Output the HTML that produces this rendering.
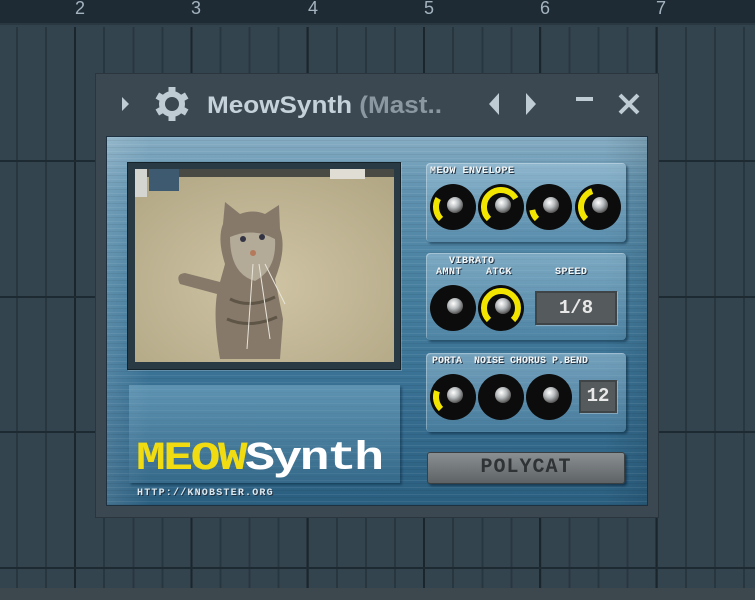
<!DOCTYPE html>
<html><head><meta charset="utf-8"><style>
*{margin:0;padding:0;box-sizing:border-box}
body{width:755px;height:600px;overflow:hidden;background:#33434e;position:relative;font-family:"Liberation Sans",sans-serif}
.ruler{position:absolute;left:0;top:0;width:755px;height:25px;background:#1f2b34;border-bottom:2px solid #2a3842}
.ruler span{position:absolute;top:-2px;color:#a3b3bf;font-size:18px;font-family:"Liberation Sans",sans-serif}
.grid{position:absolute;left:0;top:27px;width:755px;height:561px;
background:
linear-gradient(#1e2a32,#1e2a32) 0 133px/755px 2px no-repeat,
linear-gradient(#1e2a32,#1e2a32) 0 269px/755px 2px no-repeat,
linear-gradient(#1e2a32,#1e2a32) 0 404px/755px 2px no-repeat,
linear-gradient(#1e2a32,#1e2a32) 0 540px/755px 2px no-repeat,
repeating-linear-gradient(90deg,transparent 0 74px,#1a252c 74px 76px,transparent 76px 116.3px),
repeating-linear-gradient(90deg,transparent 0 16px,#28363f 16px 18px,transparent 18px 29.08px),#34444f}
.bottom{position:absolute;left:0;top:588px;width:755px;height:12px;background:#3c474e}
.win{position:absolute;left:95px;top:73px;width:564px;height:445px;background:#3b4751;border:1px solid #2b353d}
.panel{position:absolute;left:106px;top:136px;width:542px;height:370px;border:1px solid #1e3140;
background:
repeating-linear-gradient(180deg,rgba(255,255,255,.07) 0 1px,transparent 1px 3px,rgba(0,0,0,.06) 3px 4px,transparent 4px 7px),
linear-gradient(90deg,rgba(255,255,255,.12),transparent 8%,transparent 92%,rgba(0,0,0,.1)),
linear-gradient(180deg,#86adc3 0%,#5f91af 15%,#477f9f 40%,#3a7295 65%,#2b5f80 100%)}
.box{position:absolute;border-radius:4px;background:linear-gradient(180deg,rgba(170,205,225,.5),rgba(100,150,180,.4));box-shadow:2px 2px 2px rgba(0,30,50,.5),inset 1px 1px 0 rgba(255,255,255,.3)}
.lbl{position:absolute;color:#f4f6f6;font:bold 10px "Liberation Mono",monospace;letter-spacing:0.5px;text-shadow:1px 1px 0 #234}
.disp{position:absolute;background:#555a5c;border:2px solid #3f4446;color:#e8e8e8;font:bold 19px "Liberation Mono",monospace;text-align:center;box-shadow:1px 1px 0 rgba(255,255,255,.3)}
svg.k{position:absolute;width:48px;height:48px}
</style></head><body>
<div class="ruler">
<span style="left:75px">2</span><span style="left:191px">3</span><span style="left:308px">4</span><span style="left:424px">5</span><span style="left:540px">6</span><span style="left:656px">7</span>
</div>
<div class="grid"></div>
<div class="bottom"></div>
<div class="win"></div>
<svg style="position:absolute;left:95px;top:73px" width="564" height="62">
<polygon points="27,24 34,31 27,38" fill="#c0ccd4"/>
<g transform="translate(77,31)" fill="#c0ccd4">
<circle r="13"/>
<g><rect x="-3.5" y="-17" width="7" height="34"/><rect x="-3.5" y="-17" width="7" height="34" transform="rotate(60)"/><rect x="-3.5" y="-17" width="7" height="34" transform="rotate(120)"/></g>
<circle r="7" fill="#3b4751"/></g>
<text x="112" y="40" font-family="Liberation Sans,sans-serif" font-size="24" font-weight="bold" fill="#c6d2da" textLength="235" lengthAdjust="spacingAndGlyphs">MeowSynth <tspan fill="#8b98a1">(Mast..</tspan></text>
<polygon points="404,20 394,31 404,42" fill="#c0ccd4"/>
<polygon points="431,20 441,31 431,42" fill="#c0ccd4"/>
<rect x="481" y="24" width="17" height="4" fill="#c0ccd4"/>
<path d="M525,22 L543,40 M543,22 L525,40" stroke="#c0ccd4" stroke-width="4"/>
</svg>
<div class="panel"></div>
<div style="position:absolute;left:127px;top:162px;width:274px;height:208px;background:#2a3a44;border:1px solid #16222a;box-shadow:1px 1px 0 rgba(255,255,255,.2)"></div>
<svg style="position:absolute;left:135px;top:169px" width="259" height="193">
<defs><radialGradient id="fl" cx="50%" cy="60%" r="70%"><stop offset="0" stop-color="#cfc4a4"/><stop offset="1" stop-color="#b3a886"/></radialGradient></defs>
<rect width="259" height="193" fill="url(#fl)"/>
<rect width="259" height="8" fill="#4a4a44"/>
<rect x="14" y="0" width="30" height="22" fill="#3d5a70"/>
<rect x="0" y="0" width="12" height="28" fill="#d4d4d0"/>
<rect x="195" y="0" width="35" height="10" fill="#e0ddd4"/>
<path d="M90,95 Q82,70 88,55 L90,33 L105,45 Q118,40 130,45 L144,36 L145,60 Q152,80 140,110 L148,150 L145,190 L85,190 Q78,150 82,125 L45,115 Q40,105 50,104 L85,113 Z" fill="#86796a"/>
<path d="M95,68 Q118,58 140,70 Q142,100 120,112 Q95,105 95,68Z" fill="#b3aa98"/>
<circle cx="108" cy="70" r="3" fill="#334"/><circle cx="127" cy="68" r="3" fill="#334"/>
<circle cx="118" cy="84" r="3" fill="#b57a5c"/>
<path d="M95,130 Q115,140 140,128 M92,150 Q115,160 142,148" stroke="#5e5547" stroke-width="3" fill="none"/>
<path d="M118,95 L112,180 M124,95 L135,170 M130,95 L150,135" stroke="#e8e4da" stroke-width="1" fill="none"/>
</svg>
<div style="position:absolute;left:129px;top:385px;width:271px;height:98px;background:linear-gradient(180deg,rgba(140,190,215,.45),rgba(70,120,150,.35));box-shadow:2px 2px 2px rgba(0,30,50,.4)"></div>
<div style="position:absolute;left:136px;top:440px;font:bold 40px 'Liberation Mono',monospace;color:#f0dc10;line-height:40px;transform:scaleX(1.24);transform-origin:0 0;white-space:nowrap;letter-spacing:-2px">MEOW<span style="color:#fff">Synth</span></div>
<div class="lbl" style="left:137px;top:488px;font-size:10px;color:#dce8ee;letter-spacing:1.2px">HTTP://KNOBSTER.ORG</div>

<div class="box" style="left:426px;top:163px;width:200px;height:79px"></div>
<div class="box" style="left:426px;top:253px;width:200px;height:87px"></div>
<div class="box" style="left:426px;top:353px;width:200px;height:79px"></div>
<div class="lbl" style="left:430px;top:166px">MEOW ENVELOPE</div>
<div class="lbl" style="left:449px;top:256px">VIBRATO</div>
<div class="lbl" style="left:436px;top:267px">AMNT</div>
<div class="lbl" style="left:486px;top:267px">ATCK</div>
<div class="lbl" style="left:555px;top:267px">SPEED</div>
<div class="lbl" style="left:432px;top:356px;letter-spacing:0">PORTA&nbsp;&nbsp;NOISE CHORUS P.BEND</div>
<div class="disp" style="left:535px;top:291px;width:82px;height:34px;line-height:30px">1/8</div>
<div class="disp" style="left:579px;top:380px;width:38px;height:33px;line-height:29px">12</div>
<div style="position:absolute;left:427px;top:452px;width:198px;height:32px;border-radius:3px;background:linear-gradient(180deg,#8a8f92,#5e6366);border:1px solid #3a3f42;box-shadow:2px 2px 2px rgba(0,20,40,.5);text-align:center;font:bold 20px 'Liberation Mono',monospace;color:#2f3335;line-height:30px;letter-spacing:1px">POLYCAT</div>

<svg width="0" height="0" style="position:absolute"><defs>
<radialGradient id="ball" cx="40%" cy="35%" r="65%"><stop offset="0" stop-color="#fff"/><stop offset=".5" stop-color="#b8bcbe"/><stop offset="1" stop-color="#555"/></radialGradient>
<g id="base"><circle cx="24" cy="24" r="23" fill="#0c0c0c"/></g>
<g id="ballg"><circle cx="26" cy="22" r="8" fill="url(#ball)"/></g>
</defs></svg>

<svg class="k" style="left:429px;top:183px"><use href="#base"/><path d="M11.98,36.02 A17,17 0 0 1 9.28,15.5" stroke="#f2e600" stroke-width="6" fill="none"/><use href="#ballg"/></svg>
<svg class="k" style="left:477px;top:183px"><use href="#base"/><path d="M11.98,36.02 A17,17 0 1 1 38.72,15.5" stroke="#f2e600" stroke-width="6" fill="none"/><use href="#ballg"/></svg>
<svg class="k" style="left:525px;top:183px"><use href="#base"/><path d="M11.98,36.02 A17,17 0 0 1 7.26,26.95" stroke="#f2e600" stroke-width="6" fill="none"/><use href="#ballg"/></svg>
<svg class="k" style="left:574px;top:183px"><use href="#base"/><path d="M11.98,36.02 A17,17 0 0 1 18.19,8.03" stroke="#f2e600" stroke-width="6" fill="none"/><use href="#ballg"/></svg>

<svg class="k" style="left:429px;top:284px"><use href="#base"/><use href="#ballg"/></svg>
<svg class="k" style="left:477px;top:284px"><use href="#base"/><path d="M11.98,36.02 A17,17 0 1 1 36.02,36.02" stroke="#f2e600" stroke-width="6" fill="none"/><use href="#ballg"/></svg>

<svg class="k" style="left:429px;top:373px"><use href="#base"/><path d="M11.98,36.02 A17,17 0 0 1 8.03,18.19" stroke="#f2e600" stroke-width="6" fill="none"/><use href="#ballg"/></svg>
<svg class="k" style="left:477px;top:373px"><use href="#base"/><use href="#ballg"/></svg>
<svg class="k" style="left:525px;top:373px"><use href="#base"/><use href="#ballg"/></svg>
</body></html>
